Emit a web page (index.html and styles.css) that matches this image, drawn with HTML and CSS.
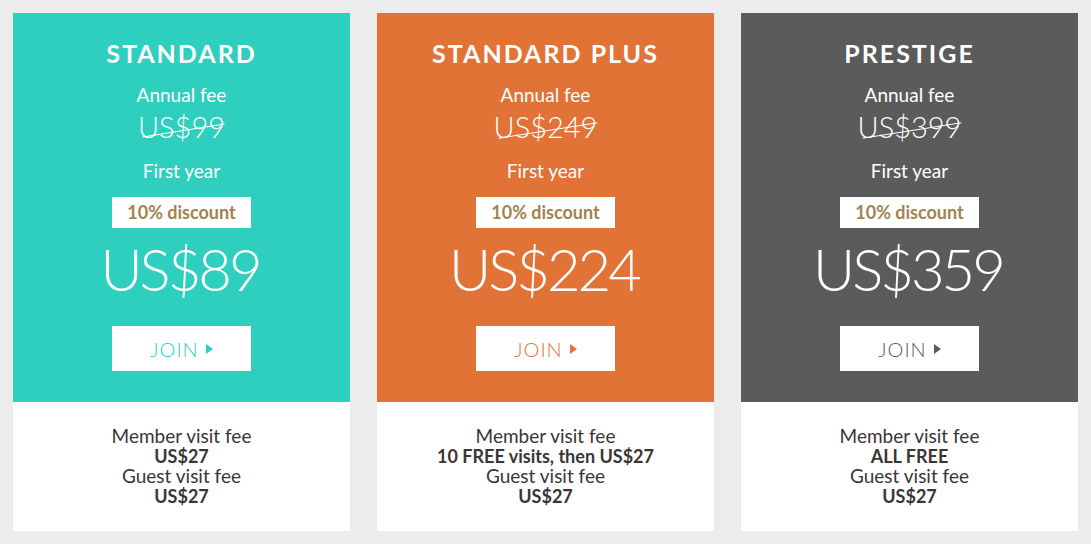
FILE: index.html
```html
<!DOCTYPE html>
<html lang="en">
<head>
<meta charset="utf-8">
<title>Membership plans</title>
<link rel="stylesheet" href="styles.css">
</head>
<body>
<div class="plans">
  <section class="plan plan-teal">
    <div class="plan-top">
      <h2 class="plan-name">STANDARD</h2>
      <p class="label">Annual fee</p>
      <p class="old-price">US$99</p>
      <p class="label label-year">First year</p>
      <div class="badge">10% discount</div>
      <p class="price">US$89</p>
      <a class="join" href="#">JOIN<span class="tri"></span></a>
    </div>
    <div class="plan-bottom">
      <p>Member visit fee</p>
      <p class="strong">US$27</p>
      <p>Guest visit fee</p>
      <p class="strong">US$27</p>
    </div>
  </section>
  <section class="plan plan-orange">
    <div class="plan-top">
      <h2 class="plan-name">STANDARD PLUS</h2>
      <p class="label">Annual fee</p>
      <p class="old-price">US$249</p>
      <p class="label label-year">First year</p>
      <div class="badge">10% discount</div>
      <p class="price">US$224</p>
      <a class="join" href="#">JOIN<span class="tri"></span></a>
    </div>
    <div class="plan-bottom">
      <p>Member visit fee</p>
      <p class="strong">10 FREE visits, then US$27</p>
      <p>Guest visit fee</p>
      <p class="strong">US$27</p>
    </div>
  </section>
  <section class="plan plan-grey">
    <div class="plan-top">
      <h2 class="plan-name">PRESTIGE</h2>
      <p class="label">Annual fee</p>
      <p class="old-price">US$399</p>
      <p class="label label-year">First year</p>
      <div class="badge">10% discount</div>
      <p class="price">US$359</p>
      <a class="join" href="#">JOIN<span class="tri"></span></a>
    </div>
    <div class="plan-bottom">
      <p>Member visit fee</p>
      <p class="strong">ALL FREE</p>
      <p>Guest visit fee</p>
      <p class="strong">US$27</p>
    </div>
  </section>
</div>
</body>
</html>
```
FILE: styles.css
```css
html, body {
  margin: 0;
  padding: 0;
}
body {
  background: #ebeceb;
  font-family: Lato, "Open Sans", sans-serif;
  color: #fff;
}
p, h2 {
  margin: 0;
}
.plans {
  display: flex;
  gap: 27px;
  padding: 13px;
}
.plan {
  width: 337px;
  display: flex;
  flex-direction: column;
}
.plan-teal { --c: #2ecfbe; }
.plan-orange { --c: #e27337; }
.plan-grey { --c: #5b5b5b; }
.plan-top {
  background: var(--c);
  height: 389px;
  box-sizing: border-box;
  padding-top: 25px;
  display: flex;
  flex-direction: column;
  align-items: center;
  text-align: center;
}
.plan-name {
  font-size: 25px;
  font-weight: 700;
  letter-spacing: 2px;
  line-height: 30px;
}
.label {
  font-size: 19px;
  line-height: 24px;
  margin-top: 15px;
}
.old-price {
  position: relative;
  font-size: 29px;
  font-weight: 300;
  line-height: 34px;
  margin-top: 3px;
}
.old-price::after {
  content: "";
  position: absolute;
  left: 4px;
  right: 0;
  top: 20px;
  height: 1px;
  background: #fff;
  transform: rotate(-9deg);
}
.label-year {
  margin-top: 15px;
}
.badge {
  margin-top: 14px;
  width: 139px;
  height: 31px;
  background: #fff;
  color: #a2834f;
  font-size: 18px;
  font-weight: 700;
  line-height: 31px;
}
.price {
  font-size: 58px;
  font-weight: 300;
  letter-spacing: -3px;
  text-indent: -3px;
  line-height: 70px;
  margin-top: 6px;
}
.join {
  margin-top: 22px;
  width: 139px;
  height: 45px;
  background: #fff;
  color: var(--c);
  text-decoration: none;
  font-size: 20px;
  font-weight: 300;
  letter-spacing: 1px;
  display: flex;
  align-items: center;
  justify-content: center;
}
.tri {
  width: 0;
  height: 0;
  border-left: 7px solid var(--c);
  border-top: 5.5px solid transparent;
  border-bottom: 5.5px solid transparent;
  margin-left: 7px;
}
.plan-bottom {
  background: #fff;
  height: 129px;
  box-sizing: border-box;
  padding-top: 24px;
  text-align: center;
  color: #3b3535;
  font-size: 19px;
  line-height: 20px;
}
.plan-bottom .strong {
  font-size: 18px;
  font-weight: 700;
}
```
